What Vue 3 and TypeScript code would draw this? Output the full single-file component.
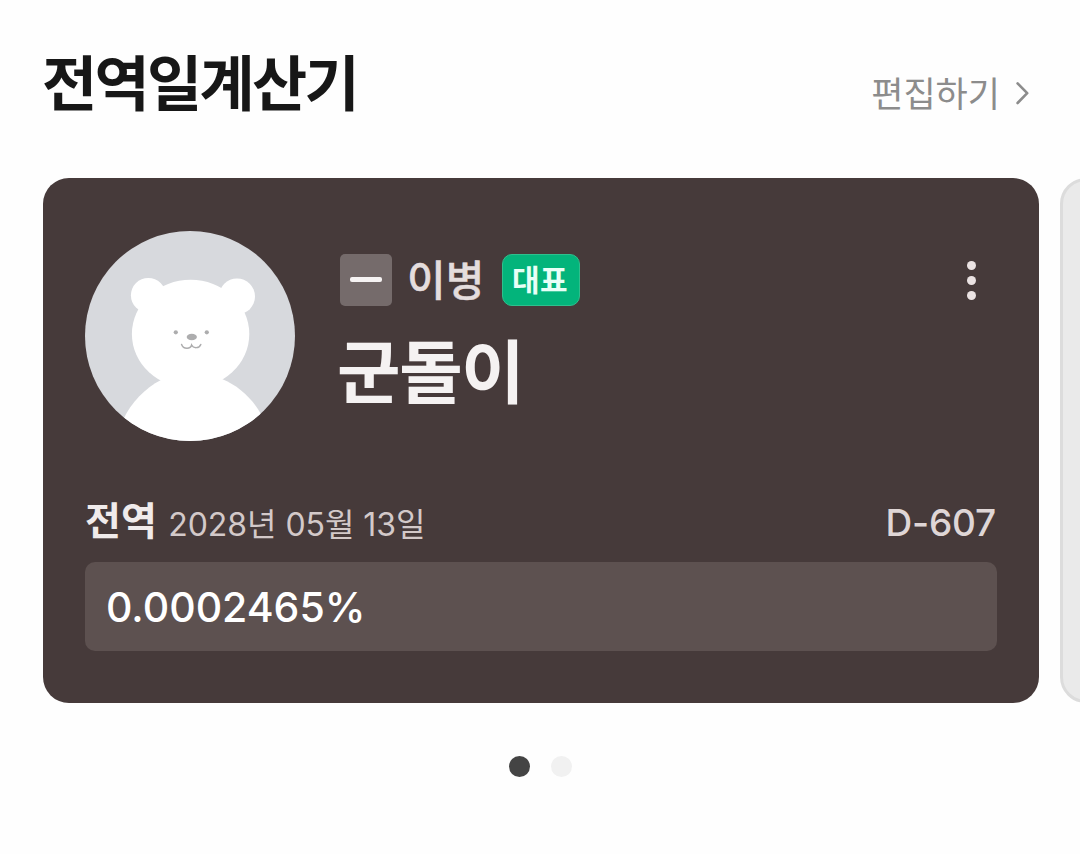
<script setup lang="ts">
import { ref } from 'vue'

interface Soldier {
  rank: string
  badge: string
  name: string
  label: string
  date: string
  dday: string
  progress: string
}

const title = '전역일계산기'
const soldier: Soldier = {
  rank: '이병',
  badge: '대표',
  name: '군돌이',
  label: '전역',
  date: '2028년 05월 13일',
  dday: 'D-607',
  progress: '0.0002465%',
}
const pages = [0, 1]
const active = ref(0)
</script>

<template>
  <main class="page">
    <header class="header">
      <h1 class="title">{{ title }}</h1>
      <a class="edit">
        <span class="edit-text">편집하기</span>
        <svg class="chevron" viewBox="0 0 16 24" width="16" height="24">
          <path d="M2.6 2.4 12.2 12.2 2.6 22" />
        </svg>
      </a>
    </header>

    <section class="carousel">
      <article class="card">
        <div class="profile">
          <svg class="avatar" viewBox="85 231 210 210" width="210" height="210">
            <defs>
              <clipPath id="avatar-clip"><circle cx="190" cy="336" r="105" /></clipPath>
            </defs>
            <g clip-path="url(#avatar-clip)">
              <rect x="85" y="231" width="210" height="210" fill="#d7d9dd" />
              <g fill="#fff">
                <circle cx="148.3" cy="295.3" r="17.4" />
                <circle cx="237" cy="296.4" r="18" />
                <ellipse cx="190.6" cy="334" rx="58.7" ry="54.2" />
                <path d="M123.5 419C131 403 145 388 161 380L191 374L222 379C239 386 253 399 262 416V445H123.5Z" />
              </g>
              <g fill="#adadae">
                <circle cx="175.8" cy="332.3" r="2.1" />
                <circle cx="206.8" cy="332.3" r="2.1" />
                <ellipse cx="191.8" cy="337" rx="5.1" ry="3.2" />
              </g>
              <path
                d="M181.6 344.4C183.4 349.4 190.4 349.4 191.6 345C193.4 348.6 199.2 348.6 200.8 344.4"
                fill="none"
                stroke="#adadae"
                stroke-width="1.5"
                stroke-linecap="round"
              />
            </g>
          </svg>

          <div class="info">
            <div class="rank-row">
              <span class="insignia"><i class="bar" /></span>
              <span class="rank">{{ soldier.rank }}</span>
              <span class="badge"><span class="badge-text">{{ soldier.badge }}</span></span>
            </div>
            <div class="name">{{ soldier.name }}</div>
          </div>

          <button class="more" aria-label="more">
            <i v-for="n in 3" :key="n" class="more-dot" />
          </button>
        </div>

        <div class="meta">
          <span class="label">{{ soldier.label }}</span>
          <span class="date">{{ soldier.date }}</span>
          <span class="dday">{{ soldier.dday }}</span>
        </div>

        <div class="progress">
          <span class="progress-text">{{ soldier.progress }}</span>
        </div>
      </article>
      <article class="next-card" />
    </section>

    <nav class="pager">
      <i v-for="p in pages" :key="p" class="dot" :class="{ on: p === active }" />
    </nav>
  </main>
</template>

<style>
body {
  background: #fefefe;
}
</style>

<style scoped>
.page {
  width: 1080px;
  height: 854px;
  overflow: hidden;
  background: #fefefe;
  font-family: Inter, "Noto Sans CJK KR", sans-serif;
  white-space: nowrap;
}
.header {
  box-sizing: border-box;
  height: 178px;
  padding: 44px 49px 0 42px;
  display: flex;
  justify-content: space-between;
  align-items: flex-start;
}
.title {
  margin: 0;
  font-size: 60px;
  line-height: 80px;
  font-weight: 700;
  letter-spacing: -2.7px;
  color: #171717;
}
.edit {
  display: flex;
  align-items: center;
  height: 48px;
  margin-top: 25px;
  color: #8c8c8c;
}
.edit-text {
  padding-top: 1px;
  font-size: 35px;
  line-height: 48px;
  letter-spacing: 0;
}
.chevron {
  margin-left: 15px;
}
.chevron path {
  fill: none;
  stroke: #8c8c8c;
  stroke-width: 2.6;
  stroke-linecap: round;
  stroke-linejoin: round;
}
.carousel {
  display: flex;
  gap: 21px;
  padding-left: 43px;
}
.card {
  box-sizing: border-box;
  flex: none;
  width: 996px;
  height: 525px;
  padding: 53px 42px 0;
  border-radius: 26px;
  background: #463a3a;
}
.next-card {
  box-sizing: border-box;
  flex: none;
  width: 996px;
  height: 525px;
  border: 3px solid #dcdcdc;
  border-radius: 26px;
  background: #eaeaea;
}
.profile {
  display: flex;
  height: 210px;
}
.avatar {
  flex: none;
}
.info {
  padding: 23px 0 0 45px;
}
.rank-row {
  display: flex;
  align-items: center;
  height: 52px;
}
.insignia {
  display: flex;
  align-items: center;
  justify-content: center;
  width: 52px;
  height: 52px;
  border-radius: 5px;
  background: #756b6b;
}
.bar {
  width: 32px;
  height: 5px;
  margin-bottom: 1px;
  border-radius: 2px;
  background: #f6f3f3;
}
.rank {
  width: 78px;
  margin-left: 15px;
  padding-top: 2px;
  font-size: 42px;
  line-height: 52px;
  font-weight: 500;
  letter-spacing: 0;
  color: #e4dddd;
}
.badge {
  box-sizing: border-box;
  display: flex;
  align-items: center;
  justify-content: center;
  width: 78px;
  height: 52px;
  margin-left: 17px;
  border: 1px solid #2fbf8d;
  border-radius: 10px;
  background: #03b47b;
}
.badge-text {
  margin-right: 2px;
  font-size: 30px;
  line-height: 48px;
  font-weight: 700;
  letter-spacing: 0.4px;
  color: #e8fff7;
}
.rank {
  -webkit-text-stroke: 0.5px #e4dddd;
}
.name {
  margin: 22px 0 0 -3px;
  font-size: 69px;
  line-height: 90px;
  font-weight: 700;
  letter-spacing: -1.3px;
  color: #f5f2f2;
}
.more {
  display: flex;
  flex-direction: column;
  align-items: center;
  gap: 6.2px;
  width: 10px;
  margin: 29.5px 21px 0 auto;
  padding: 0;
  border: 0;
  background: none;
}
.more-dot {
  width: 9px;
  height: 9px;
  border-radius: 50%;
  background: #eae2e2;
}
.meta {
  display: flex;
  align-items: baseline;
  height: 60px;
  margin-top: 51px;
}
.label {
  position: relative;
  top: -1px;
  font-size: 39px;
  line-height: 60px;
  font-weight: 700;
  letter-spacing: 0;
  color: #f0ebeb;
}
.date {
  margin-left: 11.5px;
  font-size: 32px;
  line-height: 60px;
  letter-spacing: -0.05px;
  color: #d3c9c9;
}
.dday {
  margin: 0 1px 0 auto;
  font-size: 37px;
  line-height: 60px;
  font-weight: 500;
  letter-spacing: -0.2px;
  color: #dfd6d6;
}
.progress {
  display: flex;
  align-items: center;
  height: 89px;
  margin-top: 10px;
  padding-left: 21px;
  border-radius: 10px;
  background: #5d5150;
}
.progress-text {
  padding-top: 1px;
  font-size: 41px;
  line-height: 60px;
  font-weight: 500;
  color: #fff;
}
.pager {
  display: flex;
  justify-content: center;
  gap: 21px;
  padding-top: 53px;
}
.dot {
  width: 21px;
  height: 21px;
  border-radius: 50%;
  background: #f1f1f1;
}
.dot.on {
  background: #444;
}
</style>
